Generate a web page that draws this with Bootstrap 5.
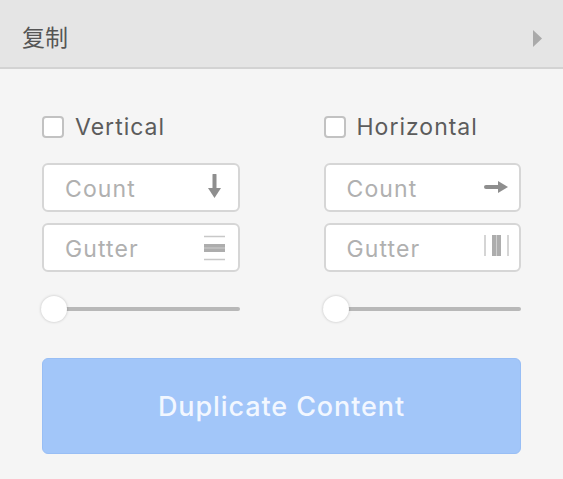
<!DOCTYPE html>
<html lang="en">
<head>
    <meta charset="UTF-8">
    <meta name="viewport" content="width=device-width, initial-scale=1.0">
    <title>Duplicate panel</title>
    <link rel="stylesheet" href="https://cdn.jsdelivr.net/npm/bootstrap@5.3.0/dist/css/bootstrap.min.css">
    <style>
        body {
            background-color: #f5f5f5;
            font-family: Inter, "Noto Sans CJK SC", sans-serif;
            overflow: hidden;
        }
        .panel-head {
            height: 69px;
            padding: 10px 22px 0;
            background: #e5e5e5;
            border-bottom: 2px solid #d3d3d3;
            color: #555;
            font-size: 23px;
        }
        .panel-arrow {
            width: 9px;
            height: 17px;
            margin-right: -1px;
            fill: #aaa;
        }
        .panel-body {
            padding: 46px 42px 0;
        }
        .dup-cols {
            column-gap: 84px;
        }
        .dup-col {
            width: 197.5px;
        }
        .dup-check {
            height: 24px;
            margin-bottom: 24px;
            color: #5c5c5c;
            font-size: 23px;
            letter-spacing: 1px;
        }
        .dup-check .form-check-input {
            width: 22px;
            height: 22px;
            margin: 0 11px 0 0;
            border: 2px solid #c2c2c2;
            border-radius: 4px;
        }
        .dup-field {
            height: 49px;
            margin-bottom: 11px;
            padding-right: 8px;
            background: #fff;
            border: 2px solid #d6d6d6;
            border-radius: 6px;
        }
        .dup-field .form-control {
            padding: 3px 0 0 21px;
            background: transparent;
            border: 0;
            box-shadow: none;
            font-size: 23px;
            letter-spacing: 1.1px;
        }
        .dup-field .form-control::placeholder {
            color: #b0b0b0;
        }
        .dup-icon {
            flex: none;
            width: 28px;
            height: 28px;
        }
        .dup-slider {
            width: calc(100% + 1px);
            height: 26px;
            margin-top: 24px;
            margin-left: -1px;
            padding: 0;
            display: block;
        }
        .dup-slider::-webkit-slider-runnable-track {
            height: 4px;
            background: #b8b8b8;
            border-radius: 2px;
        }
        .dup-slider::-webkit-slider-thumb {
            width: 26px;
            height: 26px;
            margin-top: -11px;
            background: #fff;
            border-radius: 50%;
            box-shadow: 0 0 3px rgba(0, 0, 0, 0.22);
        }
        .btn-dup {
            width: 479px;
            height: 96px;
            margin-top: 36px;
            padding-top: 8px;
            background: #a2c6f9;
            border: 1px solid #98bef5;
            border-radius: 6px;
            color: #f2f7ff;
            font-size: 27px;
            font-weight: 500;
            letter-spacing: 0.9px;
        }
        .btn-dup:disabled {
            background: #a2c6f9;
            border-color: #98bef5;
            color: #f2f7ff;
            opacity: 1;
        }
    </style>
</head>
<body>
    <div class="panel-head d-flex align-items-center justify-content-between">
        <span>复制</span>
        <svg class="panel-arrow" viewBox="0 0 9 17"><path d="M0 0 9 8.500 0 17z"/></svg>
    </div>

    <div class="panel-body">
        <div class="dup-cols d-flex">
            <div class="dup-col">
                <label class="dup-check d-flex align-items-center">
                    <input class="form-check-input" type="checkbox">Vertical
                </label>
                <div class="dup-field d-flex align-items-center">
                    <input class="form-control" type="text" placeholder="Count">
                    <svg class="dup-icon" viewBox="0 0 28 28">
                        <path d="M12.500 1v15" stroke="#8e8e8e" stroke-width="4" stroke-linecap="round" fill="none"/>
                        <path d="M6 14h13l-6.500 10z" fill="#8e8e8e"/>
                    </svg>
                </div>
                <div class="dup-field d-flex align-items-center">
                    <input class="form-control" type="text" placeholder="Gutter">
                    <svg class="dup-icon" viewBox="0 0 28 28">
                        <path d="M2 2.500h21M2 25.500h21" stroke="#c8c8c8" stroke-width="1.500" fill="none"/>
                        <path d="M2 10h21v8H2z" fill="#adadad"/>
                        <path d="M2 14h21" stroke="#cfcfcf" stroke-width="1" fill="none"/>
                    </svg>
                </div>
                <input class="form-range dup-slider" type="range" min="0" max="100" value="0">
            </div>
            <div class="dup-col">
                <label class="dup-check d-flex align-items-center">
                    <input class="form-check-input" type="checkbox">Horizontal
                </label>
                <div class="dup-field d-flex align-items-center">
                    <input class="form-control" type="text" placeholder="Count">
                    <svg class="dup-icon" viewBox="0 0 28 28">
                        <path d="M3 13h15" stroke="#8e8e8e" stroke-width="4" stroke-linecap="round" fill="none"/>
                        <path d="M15 7l10 6-10 6z" fill="#8e8e8e"/>
                    </svg>
                </div>
                <div class="dup-field d-flex align-items-center">
                    <input class="form-control" type="text" placeholder="Gutter">
                    <svg class="dup-icon" viewBox="0 0 28 28">
                        <path d="M2 1v21M25 1v21" stroke="#c8c8c8" stroke-width="1.500" fill="none"/>
                        <path d="M9 1h9v21H9z" fill="#adadad"/>
                        <path d="M13.500 1v21" stroke="#cfcfcf" stroke-width="1" fill="none"/>
                    </svg>
                </div>
                <input class="form-range dup-slider" type="range" min="0" max="100" value="0">
            </div>
        </div>
        <button class="btn btn-dup d-block" type="button" disabled>Duplicate Content</button>
    </div>
</body>
</html>
